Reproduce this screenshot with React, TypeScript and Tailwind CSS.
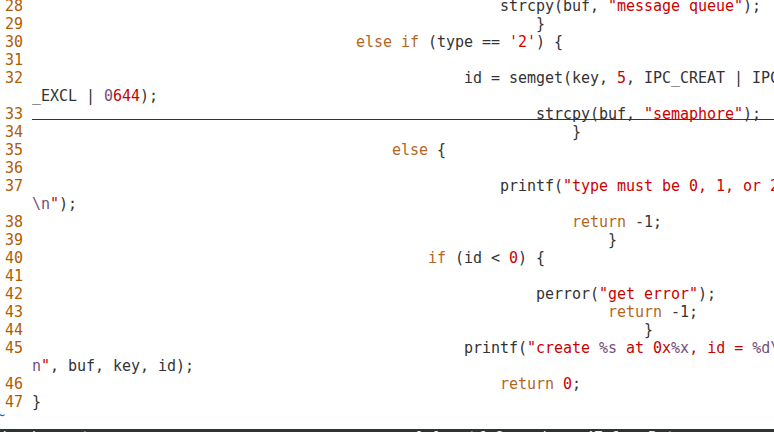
import React from "react";

type Seg = [string, string];

const T = "text-[#333333]";
const K = "text-[#b3661f]";
const S = "text-[#cc0000]";
const P = "text-[#75507b]";

type Row = { n?: number; indent?: number; segs?: Seg[]; cursor?: boolean };

const rows: Row[] = [
  { n: 28, indent: 52, segs: [["strcpy(buf, ", T], ['"message queue"', S], [");", T]] },
  { n: 29, indent: 56, segs: [["}", T]] },
  { n: 30, indent: 36, segs: [["else if", K], [" (type == ", T], ["'2'", S], [") {", T]] },
  { n: 31 },
  { n: 32, indent: 48, segs: [["id = semget(key, ", T], ["5", S], [", IPC_CREAT | IPC", T]] },
  { segs: [["_EXCL | ", T], ["0", P], ["644", S], [");", T]] },
  { n: 33, indent: 56, cursor: true, segs: [["strcpy(buf, ", T], ['"semaphore"', S], [");", T]] },
  { n: 34, indent: 60, segs: [["}", T]] },
  { n: 35, indent: 40, segs: [["else", K], [" {", T]] },
  { n: 36 },
  { n: 37, indent: 52, segs: [["printf(", T], ['"type must be 0, 1, or 2', S]] },
  { segs: [["\\n", P], ['"', S], [");", T]] },
  { n: 38, indent: 60, segs: [["return", K], [" -1;", T]] },
  { n: 39, indent: 64, segs: [["}", T]] },
  { n: 40, indent: 44, segs: [["if", K], [" (id < ", T], ["0", S], [") {", T]] },
  { n: 41 },
  { n: 42, indent: 56, segs: [["perror(", T], ['"get error"', S], [");", T]] },
  { n: 43, indent: 64, segs: [["return", K], [" -1;", T]] },
  { n: 44, indent: 68, segs: [["}", T]] },
  {
    n: 45,
    indent: 48,
    segs: [
      ["printf(", T],
      ['"create ', S],
      ["%s", P],
      [" at 0x", S],
      ["%x", P],
      [", id = ", S],
      ["%d\\", P],
    ],
  },
  { segs: [["n", P], ['"', S], [", buf, key, id);", T]] },
  { n: 46, indent: 52, segs: [["return", K], [" ", T], ["0", S], [";", T]] },
  { n: 47, indent: 0, segs: [["}", T]] },
];

function CodeRow({ row }: { row: Row }) {
  const line = "bg-[linear-gradient(to_bottom,transparent_14px,#333333_14px,#333333_15px,transparent_15px)]";
  const redLine = "bg-[linear-gradient(to_bottom,transparent_14px,#cc0000_14px,#cc0000_15px,transparent_15px)]";
  return (
    <div className="flex h-[18px]">
      <span className="w-[36px] shrink-0 whitespace-pre text-[#b05c00]">
        {row.n !== undefined ? String(row.n).padStart(3, " ") + " " : "    "}
      </span>
      <span className={`flex-1 overflow-hidden whitespace-pre ${row.cursor ? line : ""}`}>
        {" ".repeat(row.indent ?? 0)}
        {row.segs?.map(([text, color], i) => (
          <span key={i} className={`${color} ${row.cursor && color === S ? redLine : ""}`}>
            {text}
          </span>
        ))}
      </span>
    </div>
  );
}

export default function App() {
  return (
    <div className="h-[432px] w-full overflow-hidden bg-white font-['DejaVu_Sans_Mono',monospace] text-[15px] leading-[18px] tracking-[-0.03px] text-[#333333]">
      <div className="-ml-[4px] -mt-[3px]">
        {rows.map((r, i) => (
          <CodeRow key={i} row={r} />
        ))}
        {/* end-of-buffer filler */}
        <div className="flex h-[18px]">
          <span className="whitespace-pre leading-[8px] text-[#3465a4]">~</span>
        </div>
        <div className="h-[18px] whitespace-pre bg-[#2e3436] pl-[4px] text-[#eeeeec]">
          {"ipc/semget.c                                  [c]  utf-8  unix   47,1   Bot"}
        </div>
      </div>
    </div>
  );
}
